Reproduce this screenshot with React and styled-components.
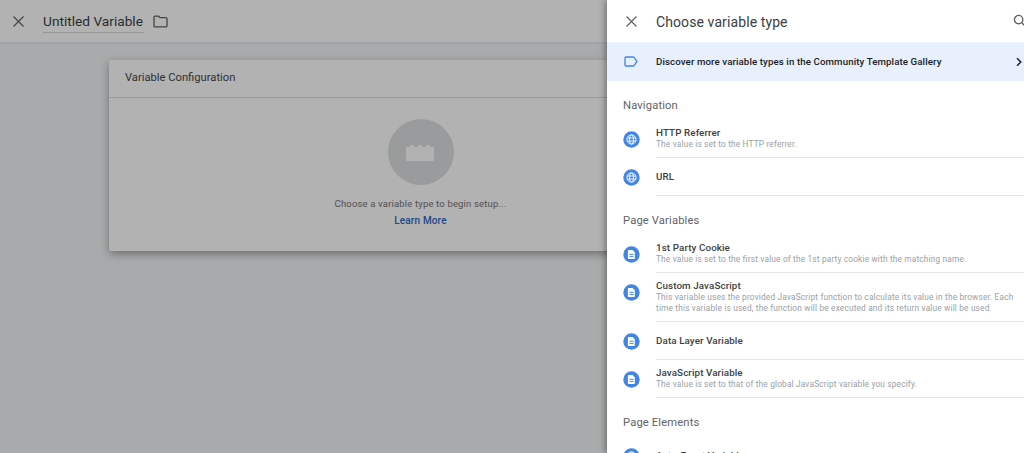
import React from "react";
import styled, { createGlobalStyle } from "styled-components";

const Global = createGlobalStyle`
  html, body { margin: 0; padding: 0; height: 100%; overflow: hidden; background: #f2f4f5; }
  #root { height: 100%; }
  * { box-sizing: border-box; }
`;

const Page = styled.div`
  position: relative;
  width: 1024px;
  height: 453px;
  overflow: hidden;
  font-family: Roboto, "Liberation Sans", sans-serif;
  color: #202124;
`;
const TopBar = styled.header`
  display: flex;
  align-items: center;
  height: 42px;
  padding-left: 11px;
  background: #fff;
  box-shadow: 0 1px 2px rgba(0, 0, 0, 0.08);
`;
const BarTitle = styled.div`
  margin-left: 17px;
  width: 101px;
  height: 24px;
  padding-top: 3px;
  font-size: 13.7px;
  line-height: 19px;
  white-space: nowrap;
  color: #3c4043;
  border-bottom: 1px solid #d6d6d6;
`;
const FolderBtn = styled.span`
  display: flex;
  margin-left: 9px;
  color: #5f6368;
`;
const CloseBtn = styled.span`
  display: flex;
  color: #5f6368;
`;
const Card = styled.section`
  width: 623px;
  height: 191px;
  margin: 18px 0 0 109px;
  background: #fff;
  border-radius: 2px;
  box-shadow: 0 3px 8px rgba(0, 0, 0, 0.35);
`;
const CardHead = styled.div`
  height: 38px;
  padding: 9px 0 0 16px;
  font-size: 11.2px;
  line-height: 18px;
  color: #45484b;
  border-bottom: 1px solid #dadce0;
`;
const CardBody = styled.div`
  display: flex;
  flex-direction: column;
  align-items: center;
  padding-top: 21px;
`;
const Circle = styled.div`
  display: flex;
  align-items: center;
  justify-content: center;
  width: 66px;
  height: 66px;
  border-radius: 50%;
  background: #dcdee0;
`;
const Hint = styled.div`
  margin-top: 11px;
  font-size: 9.5px;
  line-height: 15px;
  letter-spacing: 0.16px;
  color: #757575;
`;
const LearnLink = styled.a`
  margin-top: 2px;
  font-size: 10px;
  line-height: 15px;
  font-weight: 500;
  letter-spacing: 0.15px;
  color: #3367c0;
`;
const Scrim = styled.div`
  position: absolute;
  inset: 0;
  background: rgba(0, 0, 0, 0.3);
`;
const Drawer = styled.aside`
  position: absolute;
  top: 0;
  right: 0;
  bottom: 0;
  width: 417px;
  overflow: hidden;
  background: #fff;
  box-shadow: -2px 0 6px rgba(0, 0, 0, 0.35);
`;
const DrawerHead = styled.div`
  display: flex;
  align-items: center;
  height: 42px;
  padding-left: 17px;
`;
const DrawerTitle = styled.h1`
  margin: 2px 0 0 17px;
  font-size: 14px;
  line-height: 20px;
  font-weight: 400;
  letter-spacing: 0.1px;
  color: #3c4043;
`;
const SearchBtn = styled.span`
  display: flex;
  margin-left: auto;
  margin-right: -3px;
  margin-top: -1px;
  color: #5f6368;
`;
const Banner = styled.div`
  display: flex;
  align-items: center;
  height: 39px;
  padding-left: 17px;
  background: #e8f0fe;
  font-size: 9.7px;
  font-weight: 500;
  letter-spacing: 0.1px;
  color: #202124;
`;
const BannerIcon = styled.span`
  display: flex;
  width: 32px;
  color: #4285e4;
`;
const BannerChevron = styled.span`
  display: flex;
  margin-left: auto;
  color: #202124;
`;
const Section = styled.div`
  padding-top: 14px;
  &:first-of-type { padding-top: 12px; }
`;
const SectionTitle = styled.h2`
  margin: 0 0 3px 16px;
  font-size: 11.2px;
  line-height: 22px;
  font-weight: 400;
  letter-spacing: 0.15px;
  color: #5f6368;
`;
const Row = styled.div`
  display: flex;
  align-items: flex-start;
  padding-left: 16px;
`;
const RowIcon = styled.span`
  flex: none;
  display: flex;
  width: 33px;
  margin-top: 11px;
`;
const RowText = styled.div`
  flex: 1;
  min-height: 38px;
  display: flex;
  flex-direction: column;
  justify-content: center;
  padding: 6px 0 7px;
  border-bottom: 1px solid #e4e5e7;
`;
const RowName = styled.div`
  font-size: 9.8px;
  line-height: 13px;
  font-weight: 500;
  letter-spacing: 0.1px;
  color: #3c4043;
`;
const RowDesc = styled.div`
  font-size: 8.3px;
  line-height: 11px;
  letter-spacing: 0.17px;
  color: #9aa0a6;
`;

const X = () => (
  <svg width="15" height="15" viewBox="0 0 15 15" fill="none" stroke="currentColor" strokeWidth="1.2">
    <path d="M2.5 2.5l10 10M12.5 2.5l-10 10" />
  </svg>
);
const Folder = () => (
  <svg width="15" height="13" viewBox="0 0 15 13" fill="none" stroke="currentColor" strokeWidth="1.3">
    <path d="M1 2.2c0-.6.4-1 1-1h3.6l1.5 1.5H13c.6 0 1 .4 1 1v7.2c0 .6-.4 1-1 1H2c-.6 0-1-.4-1-1z" />
  </svg>
);
const Search = () => (
  <svg width="14" height="14" viewBox="0 0 14 14" fill="none" stroke="currentColor" strokeWidth="1.4">
    <circle cx="5.6" cy="5.6" r="4.2" />
    <path d="M8.8 8.8l4 4" />
  </svg>
);
const Tag = () => (
  <svg width="14" height="11" viewBox="0 0 14 11" fill="none" stroke="currentColor" strokeWidth="1.3">
    <path d="M2 1h7.2c.3 0 .6.1.8.4L13 5.5 10 9.6c-.2.3-.5.4-.8.4H2c-.6 0-1-.4-1-1V2c0-.6.4-1 1-1z" />
  </svg>
);
const Chevron = () => (
  <svg width="10" height="10" viewBox="0 0 10 10" fill="none" stroke="currentColor" strokeWidth="1.5">
    <path d="M3 1.2L6.8 5 3 8.8" />
  </svg>
);
const Brick = () => (
  <svg width="29" height="17" viewBox="0 0 29 17" fill="#fff">
    <path d="M1 3h3V1.4c0-.4.2-.4.4-.4h3.2c.3 0 .4.1.4.4V3h4V1.4c0-.4.2-.4.4-.4h3.2c.3 0 .4.1.4.4V3h4V1.4c0-.4.2-.4.4-.4h3.2c.3 0 .4.1.4.4V3h3c.5 0 1 .4 1 1v12c0 .5-.4 1-1 1H1c-.5 0-1-.4-1-1V4c0-.5.4-1 1-1z" />
  </svg>
);
const GlobeIcon = () => (
  <svg width="17" height="17" viewBox="0 0 17 17">
    <circle cx="8.5" cy="8.5" r="8.2" fill="#4285e4" />
    <g fill="none" stroke="#fff" strokeWidth="0.9">
      <circle cx="8.5" cy="8.5" r="4.6" />
      <ellipse cx="8.5" cy="8.5" rx="2" ry="4.6" />
      <path d="M4 7h9M4 10h9" />
    </g>
  </svg>
);
const DocIcon = () => (
  <svg width="17" height="17" viewBox="0 0 17 17">
    <circle cx="8.5" cy="8.5" r="8.2" fill="#4285e4" />
    <path d="M5.6 4h3.9l2.3 2.3v6c0 .4-.3.7-.7.7H5.6c-.4 0-.7-.3-.7-.7V4.7c0-.4.3-.7.7-.7z" fill="#fff" />
    <path d="M6.5 8.3h4M6.5 10.4h4" stroke="#4285e4" strokeWidth="1" fill="none" />
  </svg>
);

const sections = [
  {
    title: "Navigation",
    rows: [
      { icon: GlobeIcon, name: "HTTP Referrer", desc: "The value is set to the HTTP referrer." },
      { icon: GlobeIcon, name: "URL" },
    ],
  },
  {
    title: "Page Variables",
    rows: [
      { icon: DocIcon, name: "1st Party Cookie", desc: "The value is set to the first value of the 1st party cookie with the matching name." },
      {
        icon: DocIcon,
        name: "Custom JavaScript",
        desc: "This variable uses the provided JavaScript function to calculate its value in the browser. Each time this variable is used, the function will be executed and its return value will be used.",
      },
      { icon: DocIcon, name: "Data Layer Variable" },
      { icon: DocIcon, name: "JavaScript Variable", desc: "The value is set to that of the global JavaScript variable you specify." },
    ],
  },
  {
    title: "Page Elements",
    rows: [{ icon: GlobeIcon, name: "Auto-Event Variable" }],
  },
];

export default function App() {
  return (
    <Page>
      <Global />
      <TopBar>
        <CloseBtn><X /></CloseBtn>
        <BarTitle>Untitled Variable</BarTitle>
        <FolderBtn><Folder /></FolderBtn>
      </TopBar>
      <Card>
        <CardHead>Variable Configuration</CardHead>
        <CardBody>
          <Circle><Brick /></Circle>
          <Hint>Choose a variable type to begin setup...</Hint>
          <LearnLink>Learn More</LearnLink>
        </CardBody>
      </Card>
      <Scrim />
      <Drawer>
        <DrawerHead>
          <CloseBtn><X /></CloseBtn>
          <DrawerTitle>Choose variable type</DrawerTitle>
          <SearchBtn><Search /></SearchBtn>
        </DrawerHead>
        <Banner>
          <BannerIcon><Tag /></BannerIcon>
          Discover more variable types in the Community Template Gallery
          <BannerChevron><Chevron /></BannerChevron>
        </Banner>
        {sections.map((s) => (
          <Section key={s.title}>
            <SectionTitle>{s.title}</SectionTitle>
            {s.rows.map((r) => (
              <Row key={r.name}>
                <RowIcon><r.icon /></RowIcon>
                <RowText>
                  <RowName>{r.name}</RowName>
                  {r.desc && <RowDesc>{r.desc}</RowDesc>}
                </RowText>
              </Row>
            ))}
          </Section>
        ))}
      </Drawer>
    </Page>
  );
}
